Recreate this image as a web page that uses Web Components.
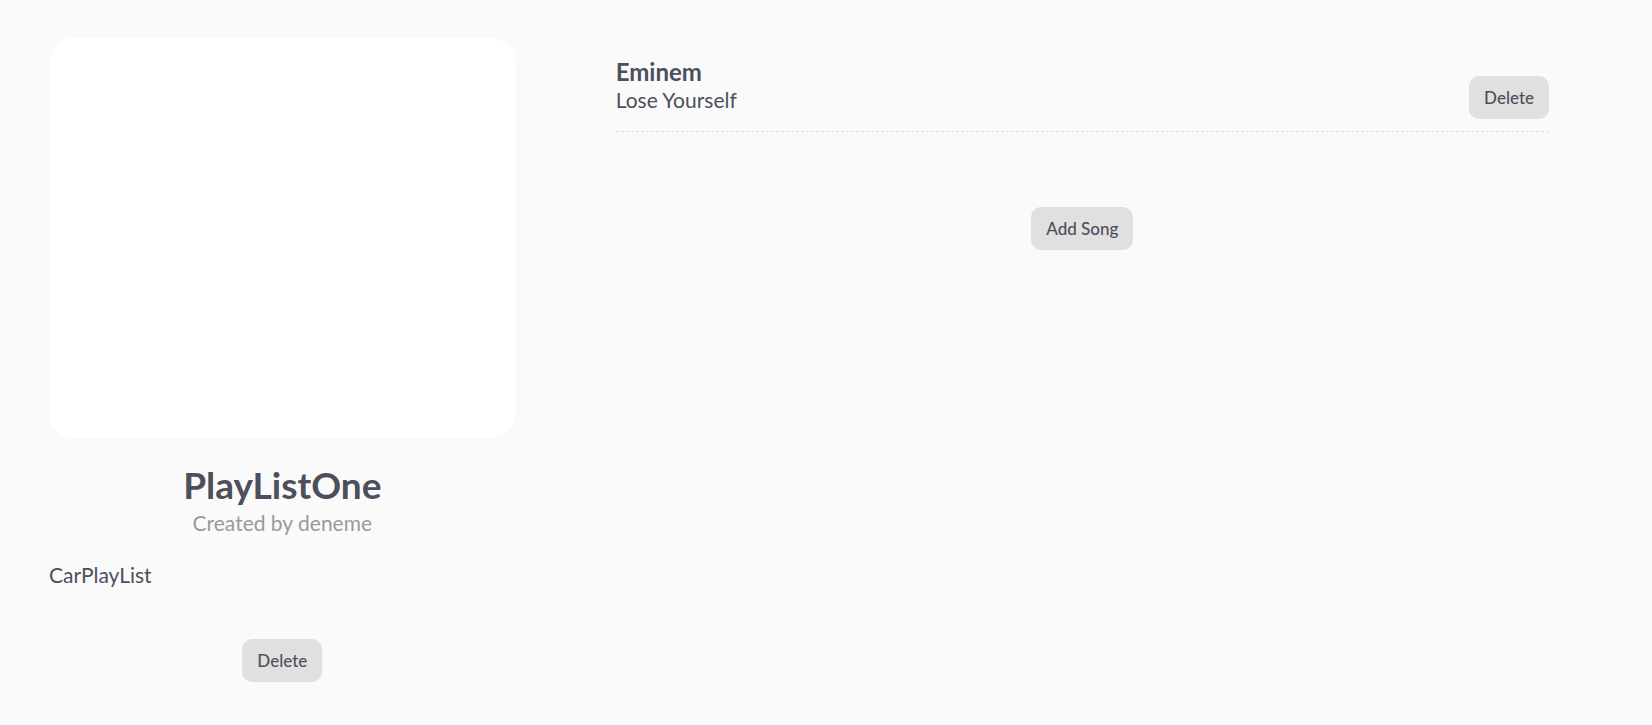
<!DOCTYPE html>
<html lang="en">
<head>
<meta charset="utf-8">
<meta name="viewport" content="width=device-width, initial-scale=1">
<title>PlayListOne</title>
<style>
  body {
    margin: 0;
    background: #fafafa;
    color: #4c505b;
    font: 21px/28px Lato, "Open Sans", sans-serif;
  }
</style>
</head>
<body>
<playlist-page>
  <playlist-card slot="summary">
    <span slot="name">PlayListOne</span>
    <span slot="author">Created by deneme</span>
    <span slot="description">CarPlayList</span>
    <soft-button slot="action">Delete</soft-button>
  </playlist-card>
  <song-row>
    <span slot="artist">Eminem</span>
    <span slot="title">Lose Yourself</span>
    <soft-button slot="action">Delete</soft-button>
  </song-row>
  <soft-button slot="add">Add Song</soft-button>
</playlist-page>
<script>
  const define = (name, html) => customElements.define(name, class extends HTMLElement {
    constructor() {
      super();
      this.attachShadow({ mode: "open" }).innerHTML = html;
    }
  });

  define("soft-button", `
    <style>
      :host { display: inline-block; }
      button {
        display: block;
        height: 43px;
        padding: 0 15px;
        border: 0;
        border-radius: 10px;
        background: #e0e0e0;
        color: inherit;
        font-family: inherit;
        font-size: 17px;
        font-weight: 500;
        line-height: 24px;
        cursor: pointer;
      }
      button:hover { background: #d6d6d6; }
    </style>
    <button type="button"><slot></slot></button>`);

  define("playlist-card", `
    <style>
      :host { display: flex; flex-direction: column; align-items: center; }
      .cover { width: 100%; height: 400px; border-radius: 25px; background: #fff; }
      h1 { margin: 23px 0 0; font-size: 37px; line-height: 48px; font-weight: 700; }
      p { margin: 0; }
      .author { color: #999; }
      .description { align-self: stretch; margin: 24px 0 50px; }
    </style>
    <div class="cover"></div>
    <h1><slot name="name"></slot></h1>
    <p class="author"><slot name="author"></slot></p>
    <p class="description"><slot name="description"></slot></p>
    <slot name="action"></slot>`);

  define("song-row", `
    <style>
      :host {
        display: flex;
        justify-content: space-between;
        align-items: flex-end;
        padding: 20px 0 13px;
        background: repeating-linear-gradient(90deg, #e0e0e0 0 3px, transparent 3px 5px) left bottom / 100% 1px no-repeat;
      }
      h2 { margin: 0; font-size: 24px; line-height: 28px; font-weight: 700; }
      p { margin: 0; }
      .text { padding-bottom: 5px; }
    </style>
    <div class="text">
      <h2><slot name="artist"></slot></h2>
      <p><slot name="title"></slot></p>
    </div>
    <slot name="action"></slot>`);

  define("playlist-page", `
    <style>
      :host { display: block; }
      main {
        display: grid;
        grid-template-columns: minmax(0, 1fr) minmax(0, 2fr);
        column-gap: 100px;
        align-items: start;
        padding: 38px 103px 40px 49px;
      }
      .add { display: flex; justify-content: center; margin-top: 75px; }
      @media (max-width: 800px) {
        main { grid-template-columns: minmax(0, 1fr); row-gap: 40px; padding: 24px; }
      }
    </style>
    <main>
      <slot name="summary"></slot>
      <section>
        <slot></slot>
        <div class="add"><slot name="add"></slot></div>
      </section>
    </main>`);
</script>
</body>
</html>
